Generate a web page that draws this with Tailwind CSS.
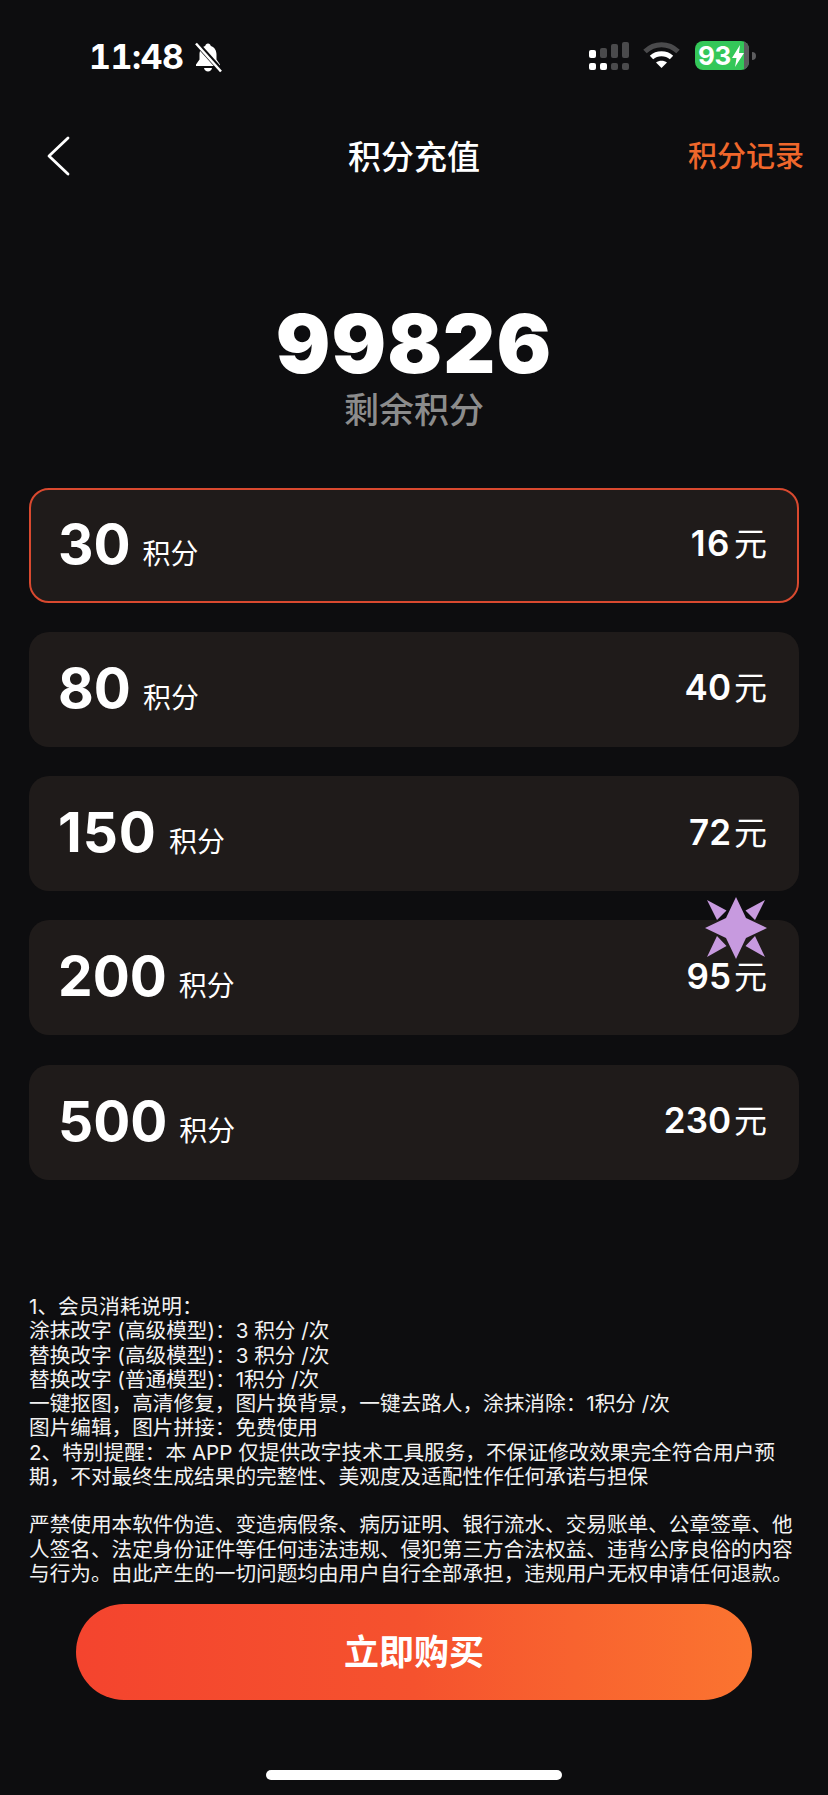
<!DOCTYPE html>
<html lang="zh-CN">
<head>
  <meta charset="UTF-8" />
  <meta name="viewport" content="width=device-width, initial-scale=1.0"/>
  <title>积分充值</title>
  <script src="https://cdn.jsdelivr.net/npm/@tailwindcss/browser@4"></script>
</head>
<body class="bg-[#0d0d0f] text-white font-['Inter','Noto_Sans_CJK_SC',sans-serif]">
<div class="w-[828px] h-[1795px] overflow-hidden flex flex-col">

  <!-- Status bar -->
  <div class="h-[112px] pt-[41px] pl-[89px] flex items-start">
    <span class="text-[34px] leading-[32px] font-bold tracking-[-0.5px] tabular-nums">11:48</span>
    <svg class="ml-[9px] mt-[1px]" width="30" height="31" viewBox="0 0 30 30">
      <path d="M15 1c1.500 0 2.500 1 2.800 2.500C21.500 4.500 23.500 8 23.500 12v5l3.500 5v1.500H3V22l3.500-5v-5c0-4 2-7.500 5.700-8.500C12.500 2 13.500 1 15 1z" fill="#fff"/>
      <path d="M11 25.500h8c-.4 2-2 3.500-4 3.500s-3.600-1.500-4-3.500z" fill="#fff"/>
      <path d="M3 0 L29 29" stroke="#0d0d0f" stroke-width="5"/>
      <path d="M3 1 L28 29" stroke="#fff" stroke-width="2.500"/>
    </svg>

    <!-- Signal -->
    <div class="ml-auto flex flex-col gap-[5px] mt-[1px]">
      <div class="flex items-end gap-[4px] h-[16px]">
        <span class="w-[7px] h-[8px] rounded-[2px] bg-white"></span>
        <span class="w-[7px] h-[10px] rounded-[2px] bg-[#4a4a4c]"></span>
        <span class="w-[7px] h-[14px] rounded-[2px] bg-[#4a4a4c]"></span>
        <span class="w-[7px] h-[16px] rounded-[2px] bg-[#4a4a4c]"></span>
      </div>
      <div class="flex gap-[4px]">
        <span class="w-[7px] h-[7px] rounded-[2px] bg-white"></span>
        <span class="w-[7px] h-[7px] rounded-[2px] bg-white"></span>
        <span class="w-[7px] h-[7px] rounded-[2px] bg-[#4a4a4c]"></span>
        <span class="w-[7px] h-[7px] rounded-[2px] bg-[#4a4a4c]"></span>
      </div>
    </div>

    <!-- Wifi -->
    <svg class="ml-[14px]" width="37" height="28" viewBox="0 0 37 28">
      <path d="M2 10.500C11.500 1.500 25.500 1.500 35 10.500" fill="none" stroke="#4a4a4c" stroke-width="5"/>
      <path d="M8.500 16.500C14 11.500 23 11.500 28.500 16.500" fill="none" stroke="#fff" stroke-width="5"/>
      <path d="M13 21.500C16 19 21 19 24 21.500L18.500 27z" fill="#fff"/>
    </svg>

    <!-- Battery -->
    <div class="ml-[15px] relative w-[54px] h-[29px] rounded-[8px] bg-[#34c759] overflow-hidden flex items-center pl-[3px]">
      <span class="text-[26px] leading-[29px] font-bold tracking-[-0.5px]">93</span>
      <svg class="relative z-10 ml-[1px]" width="12" height="22" viewBox="0 0 12 22"><path d="M8 0 L0 13h4.500L3 22l9-14H7z" fill="#fff"/></svg>
      <span class="absolute right-0 top-0 w-[5px] h-full bg-[#5c5c5e]"></span>
    </div>
    <span class="ml-[3px] mr-[72px] mt-[11px] w-[4px] h-[8px] rounded-r-full bg-[#5c5c5e]"></span>
  </div>

  <!-- Nav -->
  <div class="relative h-[90px] flex items-center justify-center">
    <svg class="absolute left-[46px] top-[24px]" width="24" height="40" viewBox="0 0 24 40">
      <path d="M22 2 L3 20 L22 38" fill="none" stroke="#fff" stroke-width="2.800" stroke-linecap="round" stroke-linejoin="round"/>
    </svg>
    <h1 class="text-[33px] leading-[40px] font-medium">积分充值</h1>
    <span class="absolute right-[24px] top-[25px] text-[29px] leading-[40px] font-medium text-[#f0672b]">积分记录</span>
  </div>

  <!-- Balance -->
  <div class="mt-[102px] flex flex-col items-center">
    <div class="text-[81px] leading-[80px] font-black tracking-[1px]">99826</div>
    <div class="mt-[6px] text-[35px] leading-[40px] font-medium text-[#8c8c8c]">剩余积分</div>
  </div>

  <!-- Packages -->
  <div class="relative mt-[57.5px] mx-[29px] flex flex-col gap-[29.25px]">
    <div class="h-[115px] rounded-[20px] bg-[#1f1b1a] border-2 border-[#d9492f] pl-[27px] pr-[30px] pb-[3px] flex items-center justify-between">
      <div class="flex items-baseline gap-[12px]"><span class="text-[55px] leading-[60px] font-bold">30</span><span class="text-[28px] leading-[34px]">积分</span></div>
      <div class="flex items-baseline gap-[3px]"><span class="text-[35px] leading-[40px] font-semibold tracking-[1.5px]">16</span><span class="text-[33px] leading-[40px]">元</span></div>
    </div>
    <div class="h-[115px] rounded-[20px] bg-[#1f1b1a] pl-[29px] pr-[32px] pb-[3px] flex items-center justify-between">
      <div class="flex items-baseline gap-[12px]"><span class="text-[55px] leading-[60px] font-bold">80</span><span class="text-[28px] leading-[34px]">积分</span></div>
      <div class="flex items-baseline gap-[3px]"><span class="text-[35px] leading-[40px] font-semibold">40</span><span class="text-[33px] leading-[40px]">元</span></div>
    </div>
    <div class="h-[115px] rounded-[20px] bg-[#1f1b1a] pl-[29px] pr-[32px] pb-[3px] flex items-center justify-between">
      <div class="flex items-baseline gap-[12px]"><span class="text-[55px] leading-[60px] font-bold tracking-[1px]">150</span><span class="text-[28px] leading-[34px]">积分</span></div>
      <div class="flex items-baseline gap-[3px]"><span class="text-[35px] leading-[40px] font-semibold">72</span><span class="text-[33px] leading-[40px]">元</span></div>
    </div>
    <div class="h-[115px] rounded-[20px] bg-[#1f1b1a] pl-[29px] pr-[32px] pb-[3px] flex items-center justify-between">
      <div class="flex items-baseline gap-[12px]"><span class="text-[55px] leading-[60px] font-bold">200</span><span class="text-[28px] leading-[34px]">积分</span></div>
      <div class="flex items-baseline gap-[3px]"><span class="text-[35px] leading-[40px] font-semibold">95</span><span class="text-[33px] leading-[40px]">元</span></div>
    </div>
    <div class="h-[115px] rounded-[20px] bg-[#1f1b1a] pl-[29px] pr-[32px] pb-[3px] flex items-center justify-between">
      <div class="flex items-baseline gap-[12px]"><span class="text-[55px] leading-[60px] font-bold">500</span><span class="text-[28px] leading-[34px]">积分</span></div>
      <div class="flex items-baseline gap-[3px]"><span class="text-[35px] leading-[40px] font-semibold">230</span><span class="text-[33px] leading-[40px]">元</span></div>
    </div>

    <!-- Sparkle -->
    <svg class="absolute left-[675px] top-[408px]" width="64" height="64" viewBox="-32 -32 64 64">
      <path d="M0 -31 L10 -10 L31 0 L10 10 L0 31 L-10 10 L-31 0 L-10 -10z" fill="#c79adf"/>
      <path d="M-29 -28 L-9.500 -17.500 L-19 -8z M29 -28 L9.500 -17.500 L19 -8z M-29 29 L-9.500 18 L-19 8z M29 29 L9.500 18 L19 8z" fill="#c79adf"/>
    </svg>
  </div>

  <!-- Notes -->
  <div class="mt-[115.5px] ml-[29px] text-[20.65px] leading-[24.25px] text-[#f2f2f2] whitespace-nowrap">
    <div>1、会员消耗说明：</div>
    <div>涂抹改字 (高级模型)：3 积分 /次</div>
    <div>替换改字 (高级模型)：3 积分 /次</div>
    <div>替换改字 (普通模型)：1积分 /次</div>
    <div>一键抠图，高清修复，图片换背景，一键去路人，涂抹消除：1积分 /次</div>
    <div>图片编辑，图片拼接：免费使用</div>
    <div>2、特别提醒：本 APP 仅提供改字技术工具服务，不保证修改效果完全符合用户预</div>
    <div>期，不对最终生成结果的完整性、美观度及适配性作任何承诺与担保</div>
    <div class="h-[24.25px]"></div>
    <div>严禁使用本软件伪造、变造病假条、病历证明、银行流水、交易账单、公章签章、他</div>
    <div>人签名、法定身份证件等任何违法违规、侵犯第三方合法权益、违背公序良俗的内容</div>
    <div>与行为。由此产生的一切问题均由用户自行全部承担，违规用户无权申请任何退款。</div>
  </div>

  <!-- Buy button -->
  <button class="mt-[18px] mx-[76px] h-[96px] rounded-full bg-gradient-to-r from-[#f4442e] via-[#f5522e] to-[#fb7430] text-[35px] font-semibold">立即购买</button>

  <!-- Home indicator -->
  <div class="mt-[70px] mx-auto w-[296px] h-[10px] rounded-full bg-white"></div>
</div>
</body>
</html>
